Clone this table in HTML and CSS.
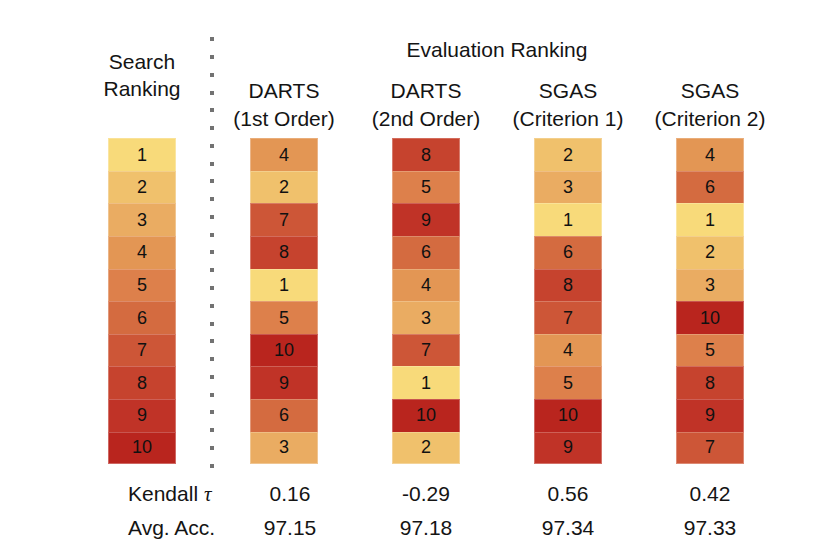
FILE: index.html
```html
<!DOCTYPE html>
<html lang="en">
<head>
<meta charset="utf-8">
<title>Search vs Evaluation Ranking</title>
<link rel="stylesheet" href="styles.css">
</head>
<body>
<div class="fig">
  <div class="top">
    <div class="search-col">
      <div class="head">Search<br>Ranking</div>
      <div class="bar">
        <div class="cell v1">1</div><div class="cell v2">2</div><div class="cell v3">3</div><div class="cell v4">4</div><div class="cell v5">5</div><div class="cell v6">6</div><div class="cell v7">7</div><div class="cell v8">8</div><div class="cell v9">9</div><div class="cell v10">10</div>
      </div>
    </div>
    <div class="divider">
      <span></span><span></span><span></span><span></span><span></span><span></span><span></span><span></span><span></span><span></span><span></span><span></span><span></span><span></span><span></span><span></span><span></span><span></span><span></span><span></span><span></span><span></span><span></span><span></span><span></span>
    </div>
    <div class="eval">
      <div class="eval-title">Evaluation Ranking</div>
      <div class="eval-cols">
        <div class="col">
          <div class="head head-eval">DARTS<br>(1st Order)</div>
          <div class="bar">
            <div class="cell v4">4</div><div class="cell v2">2</div><div class="cell v7">7</div><div class="cell v8">8</div><div class="cell v1">1</div><div class="cell v5">5</div><div class="cell v10">10</div><div class="cell v9">9</div><div class="cell v6">6</div><div class="cell v3">3</div>
          </div>
        </div>
        <div class="col">
          <div class="head head-eval">DARTS<br>(2nd Order)</div>
          <div class="bar">
            <div class="cell v8">8</div><div class="cell v5">5</div><div class="cell v9">9</div><div class="cell v6">6</div><div class="cell v4">4</div><div class="cell v3">3</div><div class="cell v7">7</div><div class="cell v1">1</div><div class="cell v10">10</div><div class="cell v2">2</div>
          </div>
        </div>
        <div class="col">
          <div class="head head-eval">SGAS<br>(Criterion 1)</div>
          <div class="bar">
            <div class="cell v2">2</div><div class="cell v3">3</div><div class="cell v1">1</div><div class="cell v6">6</div><div class="cell v8">8</div><div class="cell v7">7</div><div class="cell v4">4</div><div class="cell v5">5</div><div class="cell v10">10</div><div class="cell v9">9</div>
          </div>
        </div>
        <div class="col">
          <div class="head head-eval">SGAS<br>(Criterion 2)</div>
          <div class="bar">
            <div class="cell v4">4</div><div class="cell v6">6</div><div class="cell v1">1</div><div class="cell v2">2</div><div class="cell v3">3</div><div class="cell v10">10</div><div class="cell v5">5</div><div class="cell v8">8</div><div class="cell v9">9</div><div class="cell v7">7</div>
          </div>
        </div>
      </div>
    </div>
  </div>
  <div class="metrics">
    <div class="metric-row">
      <div class="label">Kendall <span class="tau">τ</span></div>
      <div class="val first">0.16</div>
      <div class="val">-0.29</div>
      <div class="val">0.56</div>
      <div class="val">0.42</div>
    </div>
    <div class="metric-row">
      <div class="label">Avg. Acc.</div>
      <div class="val first">97.15</div>
      <div class="val">97.18</div>
      <div class="val">97.34</div>
      <div class="val">97.33</div>
    </div>
  </div>
</div>
</body>
</html>
```
FILE: styles.css
```css
html, body {
  margin: 0;
  padding: 0;
  background: #ffffff;
}

.fig {
  height: 543px;
  overflow: hidden;
  font-family: "Liberation Sans", Arial, sans-serif;
  color: #141414;
  font-size: 21px;
}

.top {
  display: flex;
  align-items: flex-start;
  padding-left: 108px;
}

.search-col {
  width: 68px;
  display: flex;
  flex-direction: column;
  align-items: center;
  padding-top: 47.5px;
}

.head {
  line-height: 27px;
  text-align: center;
  white-space: nowrap;
}

.head-eval {
  line-height: 27.4px;
}

.search-col .bar {
  margin-top: 36.8px;
}

.bar {
  width: 68px;
  display: flex;
  flex-direction: column;
}

.cell {
  height: 32.6px;
  box-sizing: border-box;
  display: flex;
  align-items: center;
  justify-content: center;
  font-size: 18px;
  color: #111111;
  border-left: 1px solid rgba(255, 255, 255, 0.3);
  border-right: 1px solid rgba(255, 255, 255, 0.3);
  border-top: 1px solid rgba(255, 255, 255, 0.22);
}

.cell:last-child {
  border-bottom: 1px solid rgba(255, 255, 255, 0.3);
}

.v1 { background: #f8da7a; }
.v2 { background: #f0c16c; }
.v3 { background: #eaac62; }
.v4 { background: #e39654; }
.v5 { background: #dd804b; }
.v6 { background: #d46b40; }
.v7 { background: #cd5637; }
.v8 { background: #c6432e; }
.v9 { background: #c03327; }
.v10 { background: #b9251e; }

.divider {
  margin-left: 33.7px;
  margin-top: 37.3px;
  width: 4px;
  height: 430.4px;
  display: flex;
  flex-direction: column;
  justify-content: space-between;
}

.divider span {
  display: block;
  width: 4px;
  height: 4px;
  background: #727272;
}

.eval {
  margin-left: 36.3px;
  margin-top: 35.9px;
  display: flex;
  flex-direction: column;
}

.eval-title {
  line-height: 27px;
  text-align: center;
}

.eval-cols {
  display: flex;
  gap: 74px;
  margin-top: 14.4px;
}

.col {
  width: 68px;
  display: flex;
  flex-direction: column;
  align-items: center;
}

.col .bar {
  margin-top: 6.2px;
}

.metrics {
  margin-top: 9px;
  padding-left: 128px;
}

.metric-row {
  display: flex;
  line-height: 34.5px;
}

.label {
  width: 122px;
  white-space: nowrap;
}

.tau {
  font-family: "Liberation Serif", "Times New Roman", serif;
  font-style: italic;
}

.val {
  width: 68px;
  margin-right: 74px;
  text-align: center;
  white-space: nowrap;
}

.val.first {
  position: relative;
  left: 6px;
}
```
